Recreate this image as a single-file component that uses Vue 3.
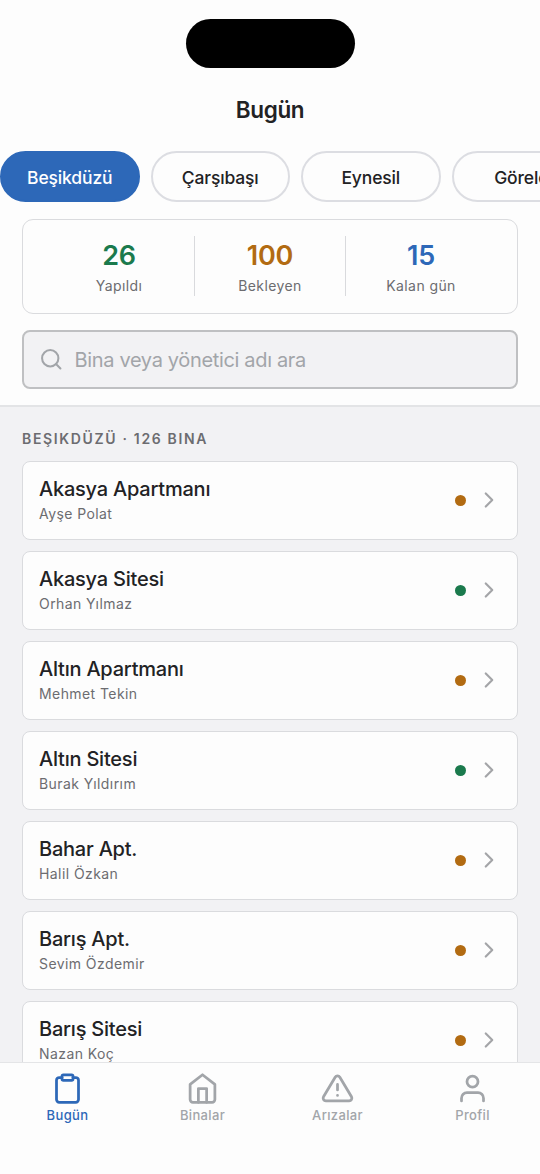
<script setup>
const districts = ['Beşikdüzü', 'Çarşıbaşı', 'Eynesil', 'Görele']
const stats = [
  { value: '26', label: 'Yapıldı', tone: 'green' },
  { value: '100', label: 'Bekleyen', tone: 'amber' },
  { value: '15', label: 'Kalan gün', tone: 'blue' },
]
const buildings = [
  { name: 'Akasya Apartmanı', manager: 'Ayşe Polat', done: false },
  { name: 'Akasya Sitesi', manager: 'Orhan Yılmaz', done: true },
  { name: 'Altın Apartmanı', manager: 'Mehmet Tekin', done: false },
  { name: 'Altın Sitesi', manager: 'Burak Yıldırım', done: true },
  { name: 'Bahar Apt.', manager: 'Halil Özkan', done: false },
  { name: 'Barış Apt.', manager: 'Sevim Özdemir', done: false },
  { name: 'Barış Sitesi', manager: 'Nazan Koç', done: false },
]
</script>

<template>
  <div class="screen">
    <header class="top">
      <div class="island"></div>
      <h1>Bugün</h1>
      <div class="chips">
        <button v-for="(d, i) in districts" :key="d" class="chip" :class="{ active: i === 0 }">{{ d }}</button>
      </div>
      <div class="stats">
        <div v-for="s in stats" :key="s.label" class="stat">
          <strong :class="s.tone">{{ s.value }}</strong>
          <span>{{ s.label }}</span>
        </div>
      </div>
      <div class="search">
        <svg class="icon" width="24.5" height="24.5" viewBox="0 0 24 24"><circle cx="11" cy="11" r="8" /><path d="M21 21l-4.35-4.35" /></svg>
        <span>Bina veya yönetici adı ara</span>
      </div>
    </header>
    <main class="list">
      <h2>BEŞIKDÜZÜ · 126 BINA</h2>
      <div v-for="b in buildings" :key="b.name" class="card">
        <div class="info">
          <div class="name">{{ b.name }}</div>
          <div class="manager">{{ b.manager }}</div>
        </div>
        <i class="dot" :class="{ done: b.done }"></i>
        <svg class="icon chevron" width="26" height="26" viewBox="0 0 24 24"><path d="M9 18l6-6-6-6" /></svg>
      </div>
    </main>
    <nav class="tabs">
      <div class="tab current">
        <svg class="icon" width="33" height="33" viewBox="0 0 24 24"><path d="M16 4h2a2 2 0 0 1 2 2v14a2 2 0 0 1-2 2H6a2 2 0 0 1-2-2V6a2 2 0 0 1 2-2h2" /><rect x="8" y="2" width="8" height="4" rx="1" /></svg>
        <span>Bugün</span>
      </div>
      <div class="tab">
        <svg class="icon" width="33" height="33" viewBox="0 0 24 24"><path d="M3 9l9-7 9 7v11a2 2 0 0 1-2 2H5a2 2 0 0 1-2-2z" /><path d="M9 22V12h6v10" /></svg>
        <span>Binalar</span>
      </div>
      <div class="tab">
        <svg class="icon" width="33" height="33" viewBox="0 0 24 24"><path d="M10.29 3.86L1.82 18a2 2 0 0 0 1.71 3h16.94a2 2 0 0 0 1.71-3L13.71 3.86a2 2 0 0 0-3.42 0z" /><path d="M12 9v4M12 17h.01" /></svg>
        <span>Arızalar</span>
      </div>
      <div class="tab">
        <svg class="icon" width="33" height="33" viewBox="0 0 24 24"><path d="M20 21v-2a4 4 0 0 0-4-4H8a4 4 0 0 0-4 4v2" /><circle cx="12" cy="7" r="4" /></svg>
        <span>Profil</span>
      </div>
    </nav>
  </div>
</template>

<style>
body { margin: 0; background: #fdfdfd; }
</style>

<style scoped>
* { box-sizing: border-box; }
.screen {
  height: 1174px;
  display: flex;
  flex-direction: column;
  overflow: hidden;
  background: #f2f2f4;
  color: #222224;
  font-family: Inter, "Liberation Sans", sans-serif;
}
.top {
  flex: none;
  height: 407px;
  padding: 19px 22px 0;
  background: #fdfdfd;
  border-bottom: 2px solid #e3e4e6;
}
.island {
  width: 169px;
  height: 49px;
  margin: 0 auto;
  border-radius: 25px;
  background: #000;
}
h1 {
  margin: 27px 0 0;
  font-size: 22.5px;
  line-height: 30px;
  font-weight: 600;
  text-align: center;
  letter-spacing: -0.35px;
}
.chips {
  display: flex;
  gap: 11px;
  margin: 26px -22px 0;
  overflow: hidden;
}
.chip {
  flex: none;
  width: 139.5px;
  height: 51px;
  padding: 2px 0 0;
  border: 2px solid #dcdde2;
  border-radius: 26px;
  background: #fdfdfd;
  color: #222224;
  font: 500 17.5px/24px Inter, "Liberation Sans", sans-serif;
  letter-spacing: -0.15px;
}
.chip.active { background: #2d68b8; border-color: #2d68b8; color: #fff; }
.stats {
  display: flex;
  height: 95px;
  margin-top: 17px;
  padding: 16px 21px 17px;
  border: 1px solid #dadbde;
  border-radius: 11px;
}
.stat {
  flex: 1;
  display: flex;
  flex-direction: column;
  align-items: center;
}
.stat + .stat { border-left: 1px solid #d9dadd; }
.stat strong { font-size: 27px; line-height: 34px; margin-top: 3px; font-weight: 600; letter-spacing: -0.2px; }
.stat span { margin-top: 3px; font-size: 14px; line-height: 20px; color: #6c6c70; letter-spacing: 0.4px; }
.green { color: #1b7a4d; }
.amber { color: #b26b12; }
.blue { color: #2d68b8; }
.icon {
  flex: none;
  display: block;
  fill: none;
  stroke: currentColor;
  stroke-width: 2;
  stroke-linecap: round;
  stroke-linejoin: round;
}
.search {
  display: flex;
  align-items: center;
  gap: 11px;
  height: 59px;
  margin-top: 16px;
  padding: 0 15px;
  border: 2px solid #bfc0c2;
  border-radius: 8px;
  background: #f2f2f4;
  color: #a2a5a9;
  font-size: 20px;
  letter-spacing: -0.34px;
}
.list { flex: 1; min-height: 0; padding: 22px 22px 0; overflow: hidden; }
h2 {
  margin: 0 0 12px;
  font-size: 14px;
  line-height: 20px;
  font-weight: 600;
  color: #6c6c70;
  letter-spacing: 1.66px;
}
.card {
  display: flex;
  align-items: center;
  height: 79px;
  margin-bottom: 11px;
  padding: 0 15px 0 16px;
  border: 1px solid #dadbde;
  border-radius: 8px;
  background: #fdfdfd;
}
.info { flex: 1; margin-top: -1px; }
.name { font-size: 20px; line-height: 26px; font-weight: 500; letter-spacing: -0.22px; }
.manager { margin-top: 2px; font-size: 14px; line-height: 20px; color: #6c6c70; letter-spacing: 0.42px; }
.dot { width: 11px; height: 11px; border-radius: 50%; background: #b26b12; }
.dot.done { background: #1b7a4d; }
.chevron { margin: -1px 0 0 10px; color: #a4a5a8; }
.tabs {
  flex: none;
  display: flex;
  height: 112px;
  border-top: 1px solid #e4e5e7;
  background: #fdfdfd;
}
.tab {
  flex: 1;
  display: flex;
  flex-direction: column;
  align-items: center;
  padding-top: 9px;
  color: #a2a5a9;
  font-size: 13px;
  line-height: 18px;
  font-weight: 500;
  letter-spacing: 0.35px;
}
.tab span { margin-top: 1px; }
.current { color: #2d68b8; }
</style>
